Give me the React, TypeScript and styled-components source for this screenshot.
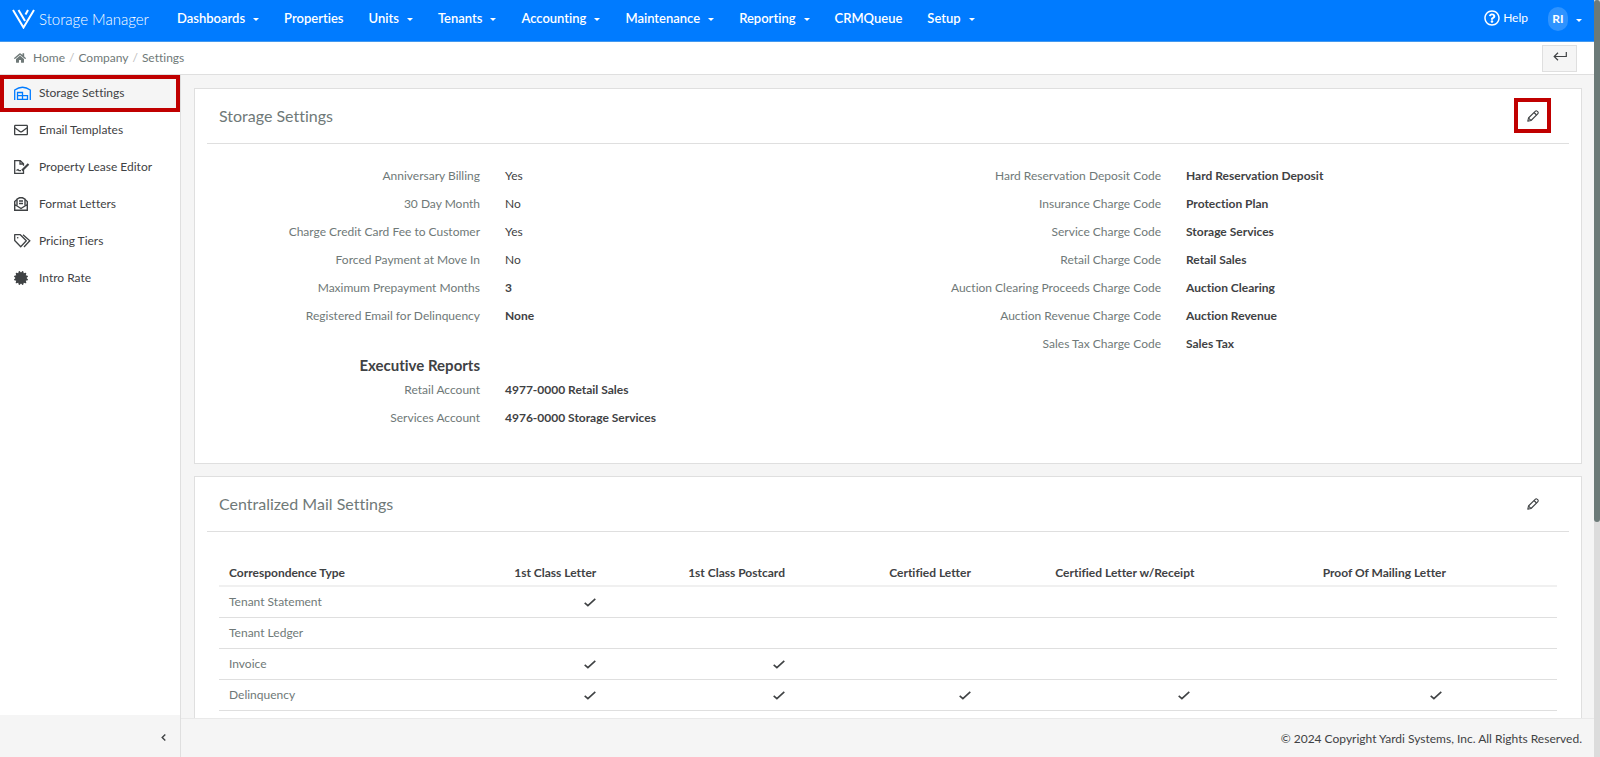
import React from 'react';
import styled, { createGlobalStyle, css } from 'styled-components';
import { FaCertificate, FaHome, FaRegEnvelope, FaRegQuestionCircle } from 'react-icons/fa';

const color = {
  brand: '#007bff',
  ink: '#3f4244',
  muted: '#6f7978',
  line: '#dfdfdf',
  panel: '#f5f5f5',
  mark: '#c00000',
};

const GlobalStyle = createGlobalStyle`
  * { box-sizing: border-box; }
  body {
    margin: 0;
    font: 12px/20px Lato, "Open Sans", sans-serif;
    font-variant-ligatures: none;
    color: ${color.ink};
    background: ${color.panel};
  }
  button { font: inherit; font-variant-ligatures: none; color: inherit; }
  a { color: inherit; text-decoration: none; }
`;

const Shell = styled.div`
  display: flex;
  height: 100vh;
`;

const Page = styled.div`
  flex: 1;
  min-width: 0;
  display: flex;
  flex-direction: column;
`;

const ScrollTrack = styled.div`
  width: 6px;
  background: #dcdcdc;
`;

const ScrollThumb = styled.div`
  height: 69%;
  background: #6c7a78;
  border-radius: 3px;
`;

const TopBar = styled.header`
  display: flex;
  align-items: center;
  flex: none;
  height: 42px;
  padding: 0 12px;
  background: ${color.brand};
  border-bottom: 1px solid #4499ee;
  color: #fff;
`;

const Brand = styled.a`
  display: flex;
  align-items: center;
  gap: 4px;
  width: 165px;
  padding-bottom: 4px;
  font-size: 15px;
  font-weight: 300;
  white-space: nowrap;
`;

const Nav = styled.nav`
  display: flex;
  flex: 1;
  gap: 25px;
  padding-bottom: 5px;
`;

const NavItem = styled.button`
  display: flex;
  align-items: center;
  gap: 8px;
  padding: 0;
  border: 0;
  background: none;
  font-size: 13px;
  font-weight: 600;
`;

const Caret = styled.span`
  margin-top: 3px;
  border: 3px solid transparent;
  border-top-color: currentColor;
  border-bottom-width: 0;
`;

const HelpLink = styled.a`
  display: flex;
  align-items: center;
  gap: 3px;
  margin-right: 20px;
  padding-bottom: 5px;
`;

const Account = styled.button`
  display: flex;
  align-items: center;
  gap: 8px;
  padding: 0 0 3px;
  border: 0;
  background: none;
`;

const Avatar = styled.span`
  width: 20px;
  border-radius: 10px;
  background: #2e93ff;
  line-height: 24px;
  font-weight: 700;
  text-align: center;
`;

const CrumbBar = styled.div`
  display: flex;
  align-items: center;
  justify-content: space-between;
  flex: none;
  height: 33px;
  padding: 0 17px 0 14px;
  background: #fff;
  border-bottom: 1px solid ${color.line};
`;

const Crumbs = styled.nav`
  display: flex;
  align-items: center;
  gap: 4px;
  color: ${color.muted};

  svg { margin-right: 3px; }
`;

const Slash = styled.span`
  color: #bbb;
`;

const BackButton = styled.button`
  display: grid;
  place-items: center;
  width: 35px;
  height: 27px;
  padding: 0 0 3px;
  border: 1px solid ${color.line};
  background: ${color.panel};
`;

const Body = styled.div`
  display: flex;
  flex: 1;
  min-height: 0;
`;

const Sidebar = styled.aside`
  display: flex;
  flex-direction: column;
  justify-content: space-between;
  flex: none;
  width: 181px;
  background: #fff;
  border-right: 1px solid ${color.line};
`;

const SideLink = styled.a<{ $active?: boolean }>`
  display: flex;
  align-items: center;
  height: 37px;
  padding: 0 0 2px 14px;

  ${(p) =>
    p.$active &&
    css`
      padding-left: 10px;
      border: 4px solid ${color.mark};
      background: ${color.panel};
    `}
`;

const SideIcon = styled.span`
  display: flex;
  align-items: center;
  width: 25px;
`;

const Collapse = styled.button`
  display: flex;
  align-items: center;
  justify-content: flex-end;
  height: 42px;
  padding: 2px 14px 0;
  border: 0;
  background: ${color.panel};
`;

const Content = styled.div`
  flex: 1;
  min-width: 0;
  display: flex;
  flex-direction: column;
`;

const Cards = styled.main`
  flex: 1;
  min-height: 0;
  overflow: hidden;
  padding: 13px 12px 0 13px;
`;

const Card = styled.section`
  margin-bottom: 12px;
  padding: 0 12px 31px;
  background: #fff;
  border: 1px solid ${color.line};
`;

const CardHead = styled.header`
  display: flex;
  align-items: center;
  justify-content: space-between;
  height: 55px;
  padding: 0 18px 1px 12px;
  border-bottom: 1px solid ${color.line};
`;

const CardTitle = styled.h2`
  margin: 0;
  font-size: 16px;
  font-weight: 400;
  color: ${color.muted};
`;

const EditButton = styled.button<{ $marked?: boolean }>`
  display: grid;
  place-items: center;
  width: 37px;
  height: 35px;
  padding: 0;
  border: 4px solid ${(p) => (p.$marked ? color.mark : 'transparent')};
  background: none;
`;

const Columns = styled.div`
  display: grid;
  grid-template-columns: 1fr 1fr;
  align-items: start;
  padding-top: 18px;
`;

const Fields = styled.dl`
  display: grid;
  grid-template-columns: 42% 58%;
  margin: 0;
  line-height: 28px;
`;

const Label = styled.dt`
  padding-right: 13px;
  text-align: right;
  color: ${color.muted};
`;

const Value = styled.dd<{ $strong?: boolean }>`
  margin: 0;
  padding-left: 12px;
  font-weight: ${(p) => (p.$strong ? 700 : 400)};
`;

const GroupTitle = styled.h3`
  width: 42%;
  margin: 24px 0 0;
  padding-right: 13px;
  font-size: 15px;
  line-height: 22px;
  text-align: right;
`;

const TableWrap = styled.div`
  padding: 27px 12px 0;
`;

const Table = styled.table`
  width: 100%;
  table-layout: fixed;
  border-collapse: collapse;

  tr { border-bottom: 1px solid ${color.line}; }
  thead tr { border-bottom: 2px solid #f0f0f0; }
  tbody tr { height: 31px; }
`;

const HeadCell = styled.th<{ $width: string; $end?: string }>`
  width: ${(p) => p.$width};
  padding: 4px ${(p) => p.$end ?? '0'} 2px 0;
  text-align: right;
  white-space: nowrap;

  &:first-child { padding-left: 10px; text-align: left; }
`;

const RowHead = styled.th`
  padding: 0 0 0 10px;
  text-align: left;
  font-weight: 400;
  color: ${color.muted};
`;

const Cell = styled.td<{ $end?: string }>`
  padding: 0 ${(p) => p.$end ?? '0'} 0 0;
  text-align: right;

  svg { display: inline-block; vertical-align: middle; }
`;

const Footer = styled.footer`
  flex: none;
  height: 39px;
  padding: 0 12px;
  border-top: 1px solid #e9e9e9;
  line-height: 40px;
  text-align: right;
`;

const LogoMark = () => (
  <svg width="23" height="20" viewBox="0 0 23 20" fill="none" stroke="#fff" strokeWidth="2">
    <path d="M1 1 11.500 18.500 22 1" />
    <path d="M6.500 1 13 12" />
    <path d="M16 1 13.500 5.500" />
  </svg>
);

const WarehouseIcon = () => (
  <svg width="17" height="14" viewBox="0 0 17 14" fill="none" stroke={color.brand} strokeWidth="1.300">
    <path d="M.7 14V4Q8.500-1.500 16.300 4v10" />
    <path d="M3.500 13.300V6.500h5v3.200h5v3.600zM3.500 9.700h5v3.600" />
  </svg>
);

const LeaseIcon = () => (
  <svg width="16" height="14" viewBox="0 0 16 14" fill="none" stroke="currentColor" strokeWidth="1.300">
    <path d="M9.500 10v3.300H.7V.7h5.600l3.200 3v2M6 .7V4h3.500M2.500 10.500l1.500-1 1 1.200h2" />
    <path d="M8 10.500 14.500 4" strokeWidth="2.200" />
  </svg>
);

const LetterIcon = () => (
  <svg width="14" height="14" viewBox="0 0 14 14" fill="none" stroke="currentColor" strokeWidth="1.400">
    <path d="M3 2.500.7 4.500v8.800h12.600V4.500L11 2.500M.7 7.500 7 11.500l6.300-4" />
    <path d="M3 8.500V2.200L5.500.8h3L11 2.200v6.300M5 4h4M5 6.500h4" />
  </svg>
);

const TagsIcon = () => (
  <svg width="17" height="14" viewBox="0 0 17 14" fill="none" stroke="currentColor" strokeWidth="1.300">
    <path d="M.7.7h5.600l6 6-5.600 6L.7 6.500z" strokeLinejoin="round" />
    <path d="M9 .7l6.800 6-5.800 6.300" />
    <circle cx="3.700" cy="3.700" r=".8" fill="currentColor" stroke="none" />
  </svg>
);

const ReturnIcon = () => (
  <svg width="14" height="9" viewBox="0 0 14 9" fill="none" stroke="currentColor" strokeWidth="1.200">
    <path d="M13.300 0v4.500H1M5 .8 1.200 4.500 5 8.200" />
  </svg>
);

const PencilIcon = () => (
  <svg width="12" height="12" viewBox="0 0 12 12" fill="none" stroke="currentColor" strokeWidth="1.100" strokeLinejoin="round">
    <path d="M.8 11.200 1.500 8 8.200 1.300a1.500 1.500 0 0 1 2.100 0l.4.400a1.500 1.500 0 0 1 0 2.100L4 10.500z" />
    <path d="M7 2.500 9.500 5M1.600 8.100 3.900 10.400" />
  </svg>
);

const CheckIcon = () => (
  <svg width="12" height="9" viewBox="0 0 12 9" fill="none" stroke={color.ink} strokeWidth="1.600" role="img" aria-label="Yes">
    <path d="M.7 4.800 3.900 7.700 11.300.8" />
  </svg>
);

const ChevronLeft = () => (
  <svg width="5" height="7" viewBox="0 0 5 7" fill="none" stroke="currentColor" strokeWidth="1.400">
    <path d="M4.300.5 1.200 3.500l3.100 3" />
  </svg>
);

const NAV: { label: string; menu: boolean }[] = [
  { label: 'Dashboards', menu: true },
  { label: 'Properties', menu: false },
  { label: 'Units', menu: true },
  { label: 'Tenants', menu: true },
  { label: 'Accounting', menu: true },
  { label: 'Maintenance', menu: true },
  { label: 'Reporting', menu: true },
  { label: 'CRMQueue', menu: false },
  { label: 'Setup', menu: true },
];

const SIDE = [
  { label: 'Storage Settings', icon: <WarehouseIcon /> },
  { label: 'Email Templates', icon: <FaRegEnvelope size={14} /> },
  { label: 'Property Lease Editor', icon: <LeaseIcon /> },
  { label: 'Format Letters', icon: <LetterIcon /> },
  { label: 'Pricing Tiers', icon: <TagsIcon /> },
  { label: 'Intro Rate', icon: <FaCertificate size={14} /> },
];

type Field = { label: string; value: string; strong?: boolean };

const BILLING: Field[] = [
  { label: 'Anniversary Billing', value: 'Yes' },
  { label: '30 Day Month', value: 'No' },
  { label: 'Charge Credit Card Fee to Customer', value: 'Yes' },
  { label: 'Forced Payment at Move In', value: 'No' },
  { label: 'Maximum Prepayment Months', value: '3', strong: true },
  { label: 'Registered Email for Delinquency', value: 'None', strong: true },
];

const REPORTS: Field[] = [
  { label: 'Retail Account', value: '4977-0000 Retail Sales', strong: true },
  { label: 'Services Account', value: '4976-0000 Storage Services', strong: true },
];

const CODES: Field[] = [
  { label: 'Hard Reservation Deposit Code', value: 'Hard Reservation Deposit', strong: true },
  { label: 'Insurance Charge Code', value: 'Protection Plan', strong: true },
  { label: 'Service Charge Code', value: 'Storage Services', strong: true },
  { label: 'Retail Charge Code', value: 'Retail Sales', strong: true },
  { label: 'Auction Clearing Proceeds Charge Code', value: 'Auction Clearing', strong: true },
  { label: 'Auction Revenue Charge Code', value: 'Auction Revenue', strong: true },
  { label: 'Sales Tax Charge Code', value: 'Sales Tax', strong: true },
];

const MAIL_COLUMNS: { label: string; width: string; end?: string; checkEnd?: string }[] = [
  { label: '1st Class Letter', width: '8.2%' },
  { label: '1st Class Postcard', width: '14.1%' },
  { label: 'Certified Letter', width: '13.9%' },
  { label: 'Certified Letter w/Receipt', width: '16.7%', checkEnd: '4px' },
  { label: 'Proof Of Mailing Letter', width: '27.1%', end: '8.3%', checkEnd: 'calc(8.3% + 4px)' },
];

const MAIL_ROWS: { label: string; checks: boolean[] }[] = [
  { label: 'Tenant Statement', checks: [true, false, false, false, false] },
  { label: 'Tenant Ledger', checks: [false, false, false, false, false] },
  { label: 'Invoice', checks: [true, true, false, false, false] },
  { label: 'Delinquency', checks: [true, true, true, true, true] },
];

const FieldList = ({ fields }: { fields: Field[] }) => (
  <Fields>
    {fields.map((f) => (
      <React.Fragment key={f.label}>
        <Label>{f.label}</Label>
        <Value $strong={f.strong}>{f.value}</Value>
      </React.Fragment>
    ))}
  </Fields>
);

const Heading = ({ title, marked }: { title: string; marked?: boolean }) => (
  <CardHead>
    <CardTitle>{title}</CardTitle>
    <EditButton $marked={marked} aria-label={`Edit ${title}`}>
      <PencilIcon />
    </EditButton>
  </CardHead>
);

export default function App() {
  return (
    <Shell>
      <GlobalStyle />
      <Page>
        <TopBar>
          <Brand href="#">
            <LogoMark />
            Storage Manager
          </Brand>
          <Nav>
            {NAV.map((n) => (
              <NavItem key={n.label}>
                {n.label}
                {n.menu && <Caret />}
              </NavItem>
            ))}
          </Nav>
          <HelpLink href="#">
            <FaRegQuestionCircle size={16} />
            Help
          </HelpLink>
          <Account>
            <Avatar>RI</Avatar>
            <Caret />
          </Account>
        </TopBar>
        <CrumbBar>
          <Crumbs aria-label="Breadcrumb">
            <FaHome size={12} />
            <a href="#">Home</a>
            <Slash>/</Slash>
            <a href="#">Company</a>
            <Slash>/</Slash>
            <a href="#">Settings</a>
          </Crumbs>
          <BackButton aria-label="Back">
            <ReturnIcon />
          </BackButton>
        </CrumbBar>
        <Body>
          <Sidebar>
            <nav>
              {SIDE.map((s, i) => (
                <SideLink key={s.label} href="#" $active={i === 0}>
                  <SideIcon>{s.icon}</SideIcon>
                  {s.label}
                </SideLink>
              ))}
            </nav>
            <Collapse aria-label="Collapse menu">
              <ChevronLeft />
            </Collapse>
          </Sidebar>
          <Content>
            <Cards>
              <Card>
                <Heading title="Storage Settings" marked />
                <Columns>
                  <div>
                    <FieldList fields={BILLING} />
                    <GroupTitle>Executive Reports</GroupTitle>
                    <FieldList fields={REPORTS} />
                  </div>
                  <FieldList fields={CODES} />
                </Columns>
              </Card>
              <Card>
                <Heading title="Centralized Mail Settings" />
                <TableWrap>
                  <Table>
                    <thead>
                      <tr>
                        <HeadCell $width="20%">Correspondence Type</HeadCell>
                        {MAIL_COLUMNS.map((c) => (
                          <HeadCell key={c.label} $width={c.width} $end={c.end}>
                            {c.label}
                          </HeadCell>
                        ))}
                      </tr>
                    </thead>
                    <tbody>
                      {MAIL_ROWS.map((r) => (
                        <tr key={r.label}>
                          <RowHead scope="row">{r.label}</RowHead>
                          {r.checks.map((on, i) => (
                            <Cell key={MAIL_COLUMNS[i].label} $end={MAIL_COLUMNS[i].checkEnd}>
                              {on && <CheckIcon />}
                            </Cell>
                          ))}
                        </tr>
                      ))}
                    </tbody>
                  </Table>
                </TableWrap>
              </Card>
            </Cards>
            <Footer>© 2024 Copyright Yardi Systems, Inc. All Rights Reserved.</Footer>
          </Content>
        </Body>
      </Page>
      <ScrollTrack>
        <ScrollThumb />
      </ScrollTrack>
    </Shell>
  );
}
